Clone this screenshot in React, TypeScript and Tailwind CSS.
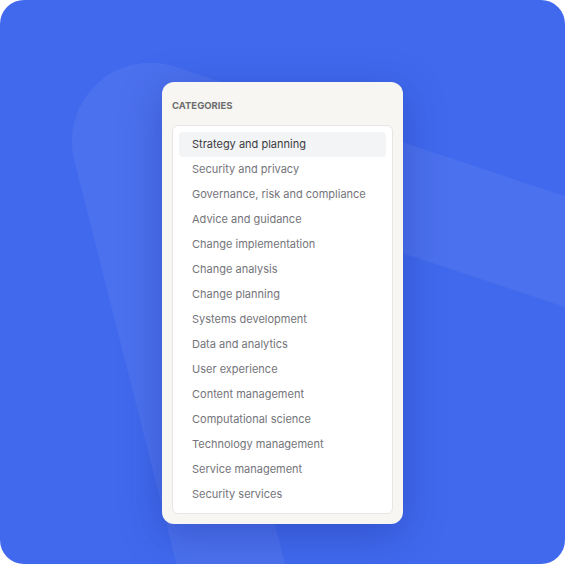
import React from "react";

const categories = [
  "Strategy and planning",
  "Security and privacy",
  "Governance, risk and compliance",
  "Advice and guidance",
  "Change implementation",
  "Change analysis",
  "Change planning",
  "Systems development",
  "Data and analytics",
  "User experience",
  "Content management",
  "Computational science",
  "Technology management",
  "Service management",
  "Security services",
];

const Backdrop: React.FC = () => (
  <svg
    className="absolute inset-0 h-full w-full"
    viewBox="0 0 565 564"
    fill="none"
    aria-hidden
  >
    <path
      d="M245 620 L125.2 147.5 A26 26 0 0 1 158.6 116.5 L620 270"
      stroke="#ffffff"
      strokeOpacity="0.06"
      strokeWidth="105"
    />
  </svg>
);

export default function App() {
  const [active, setActive] = React.useState(0);

  return (
    <div className="h-[564px] w-[565px] bg-white">
      <div className="relative flex h-full w-full items-start justify-center overflow-hidden rounded-[24px] bg-[#4169ed] pt-[82px] font-['Inter',sans-serif]">
        <Backdrop />
        <div className="relative w-[241px] rounded-xl bg-[#f7f6f3] px-[10px] pb-[10px] shadow-[0_10px_40px_rgba(20,40,140,0.35)]">
          <div className="pt-[18px] pb-[13px] text-[9.5px] font-bold leading-[12px] text-[#6e6e6e]">
            CATEGORIES
          </div>
          <ul className="rounded-md border border-[#e6e6e6] bg-white p-[6px]">
            {categories.map((c, i) => (
              <li
                key={c}
                onClick={() => setActive(i)}
                className={`flex h-[25px] cursor-pointer items-center rounded pl-[13px] text-[11px] ${
                  i === active
                    ? "bg-[#f2f4f6] text-[#3b3b3f]"
                    : "text-[#74747a]"
                }`}
              >
                {c}
              </li>
            ))}
          </ul>
        </div>
      </div>
    </div>
  );
}
